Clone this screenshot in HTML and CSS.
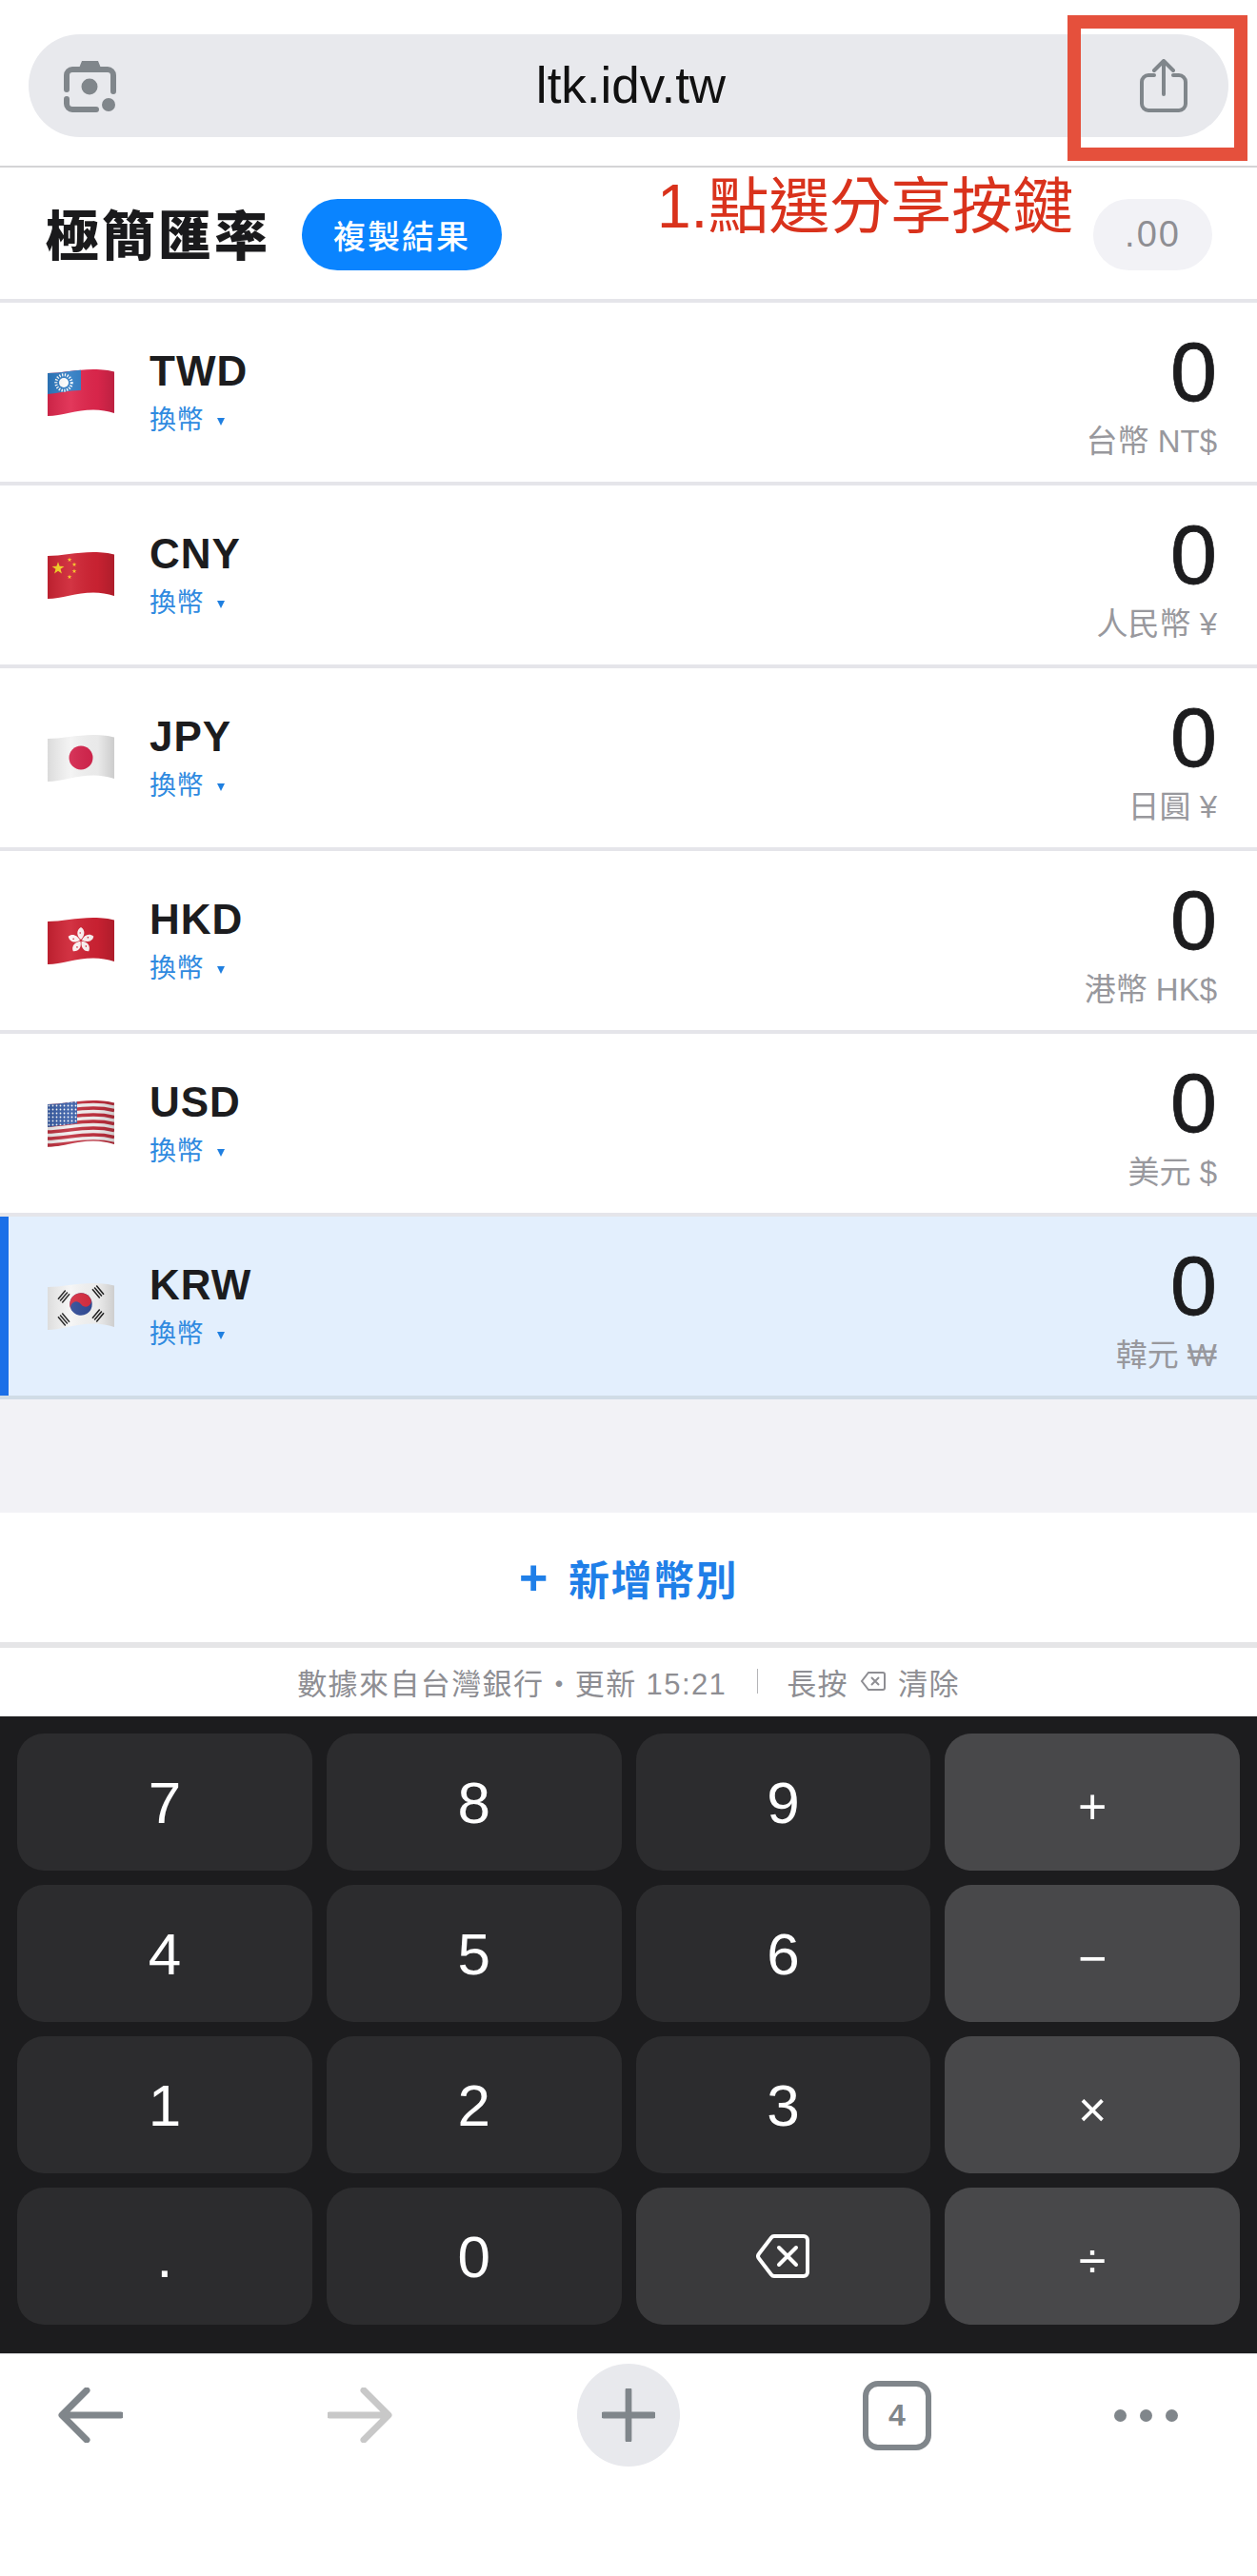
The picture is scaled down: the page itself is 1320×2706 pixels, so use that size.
FILE: index.html
```html
<!DOCTYPE html>
<html lang="zh-Hant">
<head>
    <meta charset="UTF-8">
    <meta name="viewport" content="width=device-width, initial-scale=1.0">
    <title>極簡匯率</title>
    <link rel="stylesheet" href="styles.css">
</head>
<body>
    <svg class="svg-defs" width="0" height="0" aria-hidden="true">
        <defs>
            <clipPath id="flag-clip">
                <path d="M0 4C14 4 30 0 48 0C58 0 64 1 70 2.500V46C63 44 56 42.500 48 42.500C30 42.500 14 49 0 49Z"/>
            </clipPath>
            <linearGradient id="flag-shade" x1="0" x2="1" y1="0" y2="0">
                <stop offset="0" stop-color="#000" stop-opacity=".1"/>
                <stop offset=".35" stop-color="#fff" stop-opacity=".08"/>
                <stop offset=".75" stop-color="#000" stop-opacity=".04"/>
                <stop offset="1" stop-color="#000" stop-opacity=".16"/>
            </linearGradient>
            <path id="flag-wave" d="M0 4C14 4 30 0 48 0C58 0 64 1 70 2.500"/>
            <polygon id="star" points="0,-5 1.200,-1.600 4.800,-1.500 1.900,.6 2.900,4 0,2 -2.900,4 -1.900,.6 -4.800,-1.500 -1.200,-1.600"/>
            <g id="petal">
                <path d="M0 -1C-5 -5 -5 -11 0 -14C5 -11 4 -5 0 -1Z" fill="#fdf3f3"/>
                <circle cx="-.8" cy="-8" r=".8" fill="#cf2233"/>
            </g>
            <path id="trigram" d="M-6 -2.800H6M-6 0H6M-6 2.800H6"/>
        </defs>
    </svg>

    <div class="top-bar">
        <div class="url-bar">
            <svg class="lens-icon" viewBox="0 0 55 55">
                <path class="icon-line" d="M3 31V16a6 6 0 0 1 6-6h37a6 6 0 0 1 6 6v17M3 41v5a6 6 0 0 0 6 6h25"/>
                <path class="icon-fill" d="M15 11l4-10h17l4 10z"/>
                <circle class="icon-fill" cx="27" cy="28" r="8.500"/>
                <circle class="icon-fill" cx="47" cy="47" r="7"/>
            </svg>
            <span class="url-text">ltk.idv.tw</span>
            <svg class="share-icon" viewBox="0 0 50 56">
                <path class="icon-line thin" d="M15 17H9a7 7 0 0 0-7 7v23a7 7 0 0 0 7 7h32a7 7 0 0 0 7-7V24a7 7 0 0 0-7-7h-6"/>
                <path class="icon-line thin" d="M25 37V3M15 12l10-10 10 10"/>
            </svg>
        </div>
    </div>

    <div class="header">
        <div class="title">極簡匯率</div>
        <button class="copy-btn">複製結果</button>
        <button class="decimals-btn">.00</button>
    </div>

    <div class="row">
        <svg class="flag" viewBox="0 0 70 49">
            <g clip-path="url(#flag-clip)">
                <rect width="70" height="49" fill="#e0274d"/>
                <path d="M0 0H35V22C22 22 12 25 0 26Z" fill="#2f7cc4"/>
                <circle cx="17" cy="14" r="8.200" fill="none" stroke="#fff" stroke-width="3" stroke-dasharray="1.300 1.500"/>
                <circle cx="17" cy="14" r="5" fill="#fff"/>
                <rect width="70" height="49" fill="url(#flag-shade)"/>
            </g>
        </svg>
        <div class="code-col">
            <div class="code">TWD</div>
            <div class="swap">換幣<span class="caret"></span></div>
        </div>
        <div class="value-col">
            <div class="value">0</div>
            <div class="unit">台幣 NT$</div>
        </div>
    </div>

    <div class="row">
        <svg class="flag" viewBox="0 0 70 49">
            <g clip-path="url(#flag-clip)">
                <rect width="70" height="49" fill="#cf2333"/>
                <use href="#star" transform="translate(11 17) scale(1.350)" fill="#f9d423"/>
                <use href="#star" transform="translate(23 8) scale(.5)" fill="#f9c423"/>
                <use href="#star" transform="translate(28 13) scale(.5)" fill="#f9c423"/>
                <use href="#star" transform="translate(28 20) scale(.5)" fill="#f9c423"/>
                <use href="#star" transform="translate(23 26) scale(.5)" fill="#f9c423"/>
                <rect width="70" height="49" fill="url(#flag-shade)"/>
            </g>
        </svg>
        <div class="code-col">
            <div class="code">CNY</div>
            <div class="swap">換幣<span class="caret"></span></div>
        </div>
        <div class="value-col">
            <div class="value">0</div>
            <div class="unit">人民幣 ¥</div>
        </div>
    </div>

    <div class="row">
        <svg class="flag" viewBox="0 0 70 49">
            <g clip-path="url(#flag-clip)">
                <rect width="70" height="49" fill="#f3f3f3"/>
                <circle cx="35" cy="24" r="12.500" fill="#d3234b"/>
                <rect width="70" height="49" fill="url(#flag-shade)"/>
            </g>
        </svg>
        <div class="code-col">
            <div class="code">JPY</div>
            <div class="swap">換幣<span class="caret"></span></div>
        </div>
        <div class="value-col">
            <div class="value">0</div>
            <div class="unit">日圓 ¥</div>
        </div>
    </div>

    <div class="row">
        <svg class="flag" viewBox="0 0 70 49">
            <g clip-path="url(#flag-clip)">
                <rect width="70" height="49" fill="#cf2233"/>
                <g transform="translate(35 24)">
                    <use href="#petal"/>
                    <use href="#petal" transform="rotate(72)"/>
                    <use href="#petal" transform="rotate(144)"/>
                    <use href="#petal" transform="rotate(216)"/>
                    <use href="#petal" transform="rotate(288)"/>
                </g>
                <rect width="70" height="49" fill="url(#flag-shade)"/>
            </g>
        </svg>
        <div class="code-col">
            <div class="code">HKD</div>
            <div class="swap">換幣<span class="caret"></span></div>
        </div>
        <div class="value-col">
            <div class="value">0</div>
            <div class="unit">港幣 HK$</div>
        </div>
    </div>

    <div class="row">
        <svg class="flag" viewBox="0 0 70 49">
            <defs>
                <pattern id="us-stars" width="4" height="4" patternUnits="userSpaceOnUse">
                    <circle cx="1.500" cy="1.500" r=".9" fill="#fff"/>
                </pattern>
            </defs>
            <g clip-path="url(#flag-clip)">
                <rect width="70" height="49" fill="#f4f0f0"/>
                <g class="us-stripes">
                    <use href="#flag-wave" y="1"/>
                    <use href="#flag-wave" y="8"/>
                    <use href="#flag-wave" y="15"/>
                    <use href="#flag-wave" y="22"/>
                    <use href="#flag-wave" y="29"/>
                    <use href="#flag-wave" y="36"/>
                    <use href="#flag-wave" y="43"/>
                </g>
                <path d="M0 0H31V24C20 25 10 27 0 28Z" fill="#3a5fa8"/>
                <path d="M0 0H31V24C20 25 10 27 0 28Z" fill="url(#us-stars)"/>
                <rect width="70" height="49" fill="url(#flag-shade)"/>
            </g>
        </svg>
        <div class="code-col">
            <div class="code">USD</div>
            <div class="swap">換幣<span class="caret"></span></div>
        </div>
        <div class="value-col">
            <div class="value">0</div>
            <div class="unit">美元 $</div>
        </div>
    </div>

    <div class="row row-active">
        <svg class="flag" viewBox="0 0 70 49">
            <g clip-path="url(#flag-clip)">
                <rect width="70" height="49" fill="#f5f5f5"/>
                <g transform="translate(35 22) rotate(-32)">
                    <circle r="11.700" fill="#2f4a96"/>
                    <path d="M-11.700 0A11.700 11.700 0 0 1 11.700 0A5.850 5.850 0 0 1 0 0A5.850 5.850 0 0 0 -11.700 0Z" fill="#d52b3f"/>
                </g>
                <g class="trigrams">
                    <use href="#trigram" transform="translate(17 14) rotate(-50)"/>
                    <use href="#trigram" transform="translate(53 9) rotate(50)"/>
                    <use href="#trigram" transform="translate(17 38) rotate(50)"/>
                    <use href="#trigram" transform="translate(53 34) rotate(-50)"/>
                </g>
                <rect width="70" height="49" fill="url(#flag-shade)"/>
            </g>
        </svg>
        <div class="code-col">
            <div class="code">KRW</div>
            <div class="swap">換幣<span class="caret"></span></div>
        </div>
        <div class="value-col">
            <div class="value">0</div>
            <div class="unit">韓元 ₩</div>
        </div>
    </div>

    <div class="spacer"></div>

    <div class="add-row"><span class="add-plus">+</span> 新增幣別</div>

    <div class="info-row">
        <span>數據來自台灣銀行・更新 15:21</span>
        <span class="info-sep"></span>
        <span>長按</span>
        <svg class="info-icon" viewBox="0 0 28 22">
            <path d="M9 2H24a2 2 0 0 1 2 2V18a2 2 0 0 1-2 2H9L2 11Z"/>
            <path d="M12 7l8 8M20 7l-8 8"/>
        </svg>
        <span>清除</span>
    </div>

    <div class="keypad">
        <button class="key">7</button>
        <button class="key">8</button>
        <button class="key">9</button>
        <button class="key key-op">+</button>
        <button class="key">4</button>
        <button class="key">5</button>
        <button class="key">6</button>
        <button class="key key-op">−</button>
        <button class="key">1</button>
        <button class="key">2</button>
        <button class="key">3</button>
        <button class="key key-op">×</button>
        <button class="key">.</button>
        <button class="key">0</button>
        <button class="key key-back">
            <svg class="back-icon" viewBox="0 0 56 46">
                <path d="M19 2H50a4 4 0 0 1 4 4V40a4 4 0 0 1-4 4H19a4 4 0 0 1-3-1.500L3 25.500a4 4 0 0 1 0-5L16 3.500A4 4 0 0 1 19 2Z"/>
                <path d="M24 14l18 18M42 14L24 32"/>
            </svg>
        </button>
        <button class="key key-op">÷</button>
    </div>

    <div class="bottom-bar">
        <svg class="nav-arrow" viewBox="0 0 68 58">
            <path d="M66 29H6M30 3L4 29l26 26"/>
        </svg>
        <svg class="nav-arrow nav-disabled" viewBox="0 0 68 58">
            <path d="M2 29H62M38 3l26 26-26 26"/>
        </svg>
        <div class="new-tab">
            <svg class="new-tab-icon" viewBox="0 0 58 58">
                <path d="M29 2V56M2 29H56"/>
            </svg>
        </div>
        <div class="tab-count">4</div>
        <div class="more-dots"><span></span><span></span><span></span></div>
    </div>

    <!-- annotation on top of the screenshot -->
    <div class="note-box"></div>
    <div class="note-text">1.點選分享按鍵</div>
</body>
</html>
```

FILE: styles.css
```css
* {
    box-sizing: border-box;
}
body {
    margin: 0;
    width: 1320px;
    height: 2706px;
    position: relative;
    background-color: white;
    font-family: "Liberation Sans", "Noto Sans CJK TC", sans-serif;
    color: #1c1c1e;
    overflow: hidden;
}
button {
    font-family: inherit;
    border: none;
    padding: 0;
}
.svg-defs {
    position: absolute;
}
.icon-line {
    fill: none;
    stroke: #80868b;
    stroke-width: 6;
    stroke-linecap: round;
    stroke-linejoin: round;
}
.icon-line.thin {
    stroke-width: 4;
}
.icon-fill {
    fill: #80868b;
}

/* browser address bar */
.top-bar {
    height: 176px;
    padding: 36px 30px 0;
    border-bottom: 2px solid #d4d4d6;
}
.url-bar {
    height: 108px;
    border-radius: 54px;
    background-color: #e8e9ed;
    display: flex;
    align-items: center;
    justify-content: space-between;
    padding: 0 43px 0 37px;
}
.lens-icon {
    width: 55px;
    height: 55px;
}
.url-text {
    font-size: 53px;
    color: #111;
    margin: 0 0 2px 6px;
}
.share-icon {
    width: 50px;
    height: 56px;
}

/* app header */
.header {
    height: 142px;
    display: flex;
    align-items: center;
    padding: 2px 47px 0 48px;
    border-bottom: 4px solid #e5e5ea;
}
.title {
    font-size: 56px;
    font-weight: 900;
    letter-spacing: 3px;
    line-height: 1;
    margin: 6px 33px 0 0;
    color: #1a1a1c;
}
.copy-btn {
    width: 210px;
    height: 75px;
    border-radius: 38px;
    background-color: #0a84ff;
    color: white;
    font-size: 34px;
    font-weight: 500;
    letter-spacing: 2px;
}
.decimals-btn {
    width: 125px;
    height: 75px;
    border-radius: 38px;
    background-color: #f2f2f6;
    color: #8e8e93;
    font-size: 38px;
    letter-spacing: 2px;
    margin-left: auto;
}

/* currency rows */
.row {
    height: 192px;
    display: flex;
    align-items: center;
    padding: 0 42px 0 50px;
    border-bottom: 4px solid #e5e5ea;
}
.row-active {
    background-color: #e3effd;
    border-bottom-color: #d0dce6;
    box-shadow: inset 9px 0 0 #1a6fe8;
}
.flag {
    width: 70px;
    height: 49px;
    margin-right: 37px;
    flex-shrink: 0;
}
.us-stripes use {
    fill: none;
    stroke: #c0313f;
    stroke-width: 3.500;
}
.trigrams use {
    fill: none;
    stroke: #222;
    stroke-width: 1.500;
}
.code-col {
    margin-top: 1px;
}
.code {
    font-size: 44px;
    font-weight: 700;
    letter-spacing: 1px;
    line-height: 50px;
    margin-bottom: 8px;
}
.swap {
    font-size: 28px;
    line-height: 38px;
    letter-spacing: .5px;
    color: #2f8ae0;
    display: flex;
    align-items: center;
}
.caret {
    width: 0;
    height: 0;
    margin-left: 14px;
    margin-top: 2px;
    border-left: 4px solid transparent;
    border-right: 4px solid transparent;
    border-top: 8px solid #1f7fe0;
}
.value-col {
    margin-left: auto;
    text-align: right;
    padding-top: 8px;
}
.value {
    font-size: 88px;
    line-height: 86px;
    -webkit-text-stroke: .8px #1c1c1e;
}
.unit {
    font-size: 33px;
    line-height: 40px;
    color: #98989d;
    margin-top: 10px;
}

.spacer {
    height: 119px;
    background-color: #f2f2f6;
}
.add-row {
    height: 142px;
    display: flex;
    align-items: center;
    justify-content: center;
    gap: 20px;
    font-size: 43px;
    font-weight: 700;
    letter-spacing: 1.500px;
    color: #1f7fe8;
    border-bottom: 6px solid #e5e5e7;
}
.add-plus {
    font-size: 52px;
    line-height: 1;
    font-weight: 700;
}
.info-row {
    height: 72px;
    display: flex;
    align-items: center;
    justify-content: center;
    font-size: 31px;
    letter-spacing: 1.400px;
    color: #8e8e93;
    gap: 12px;
    padding-bottom: 2px;
}
.info-sep {
    width: 1px;
    height: 26px;
    background-color: #b5b5b8;
    margin: 0 18px 0 20px;
}
.info-icon {
    width: 28px;
    height: 24px;
    fill: none;
    stroke: #8e8e93;
    stroke-width: 2;
}

/* keypad */
.keypad {
    height: 669px;
    background-color: #1c1c1e;
    padding: 18px;
    display: grid;
    grid-template-columns: repeat(4, 1fr);
    grid-auto-rows: 144px;
    gap: 15px;
}
.key {
    border-radius: 28px;
    background-color: #2c2c2e;
    color: white;
    font-size: 62px;
    display: flex;
    align-items: center;
    justify-content: center;
}
.key-op {
    background-color: #48484a;
    font-size: 52px;
    padding-top: 10px;
}
.key-back {
    background-color: #3a3a3c;
}
.back-icon {
    width: 56px;
    height: 46px;
    fill: none;
    stroke: white;
    stroke-width: 4;
    stroke-linecap: round;
    stroke-linejoin: round;
}

/* browser bottom bar */
.bottom-bar {
    height: 234px;
    border-top: 1px solid #d4d4d6;
    display: grid;
    grid-template-columns: 190px 376px 188px 376px 146px;
    justify-items: center;
    align-items: start;
    padding-top: 10px;
}
.nav-arrow {
    width: 68px;
    height: 58px;
    margin-top: 25px;
    fill: none;
    stroke: #80868b;
    stroke-width: 7;
    stroke-linecap: round;
    stroke-linejoin: round;
}
.nav-disabled {
    stroke: #c8c8c8;
}
.new-tab {
    width: 108px;
    height: 108px;
    border-radius: 50%;
    background-color: #e8e9ed;
    display: flex;
    align-items: center;
    justify-content: center;
}
.new-tab-icon {
    width: 56px;
    height: 56px;
    fill: none;
    stroke: #80868b;
    stroke-width: 7;
    stroke-linecap: round;
}
.tab-count {
    width: 72px;
    height: 73px;
    margin-top: 18px;
    border: 6px solid #80868b;
    border-radius: 16px;
    display: flex;
    align-items: center;
    justify-content: center;
    font-size: 32px;
    font-weight: 700;
    color: #80868b;
}
.more-dots {
    display: flex;
    gap: 14px;
    margin-top: 48px;
}
.more-dots span {
    width: 13px;
    height: 13px;
    border-radius: 50%;
    background-color: #80868b;
}

/* red annotation */
.note-box {
    position: absolute;
    left: 1121px;
    top: 16px;
    width: 189px;
    height: 153px;
    border: 14px solid #e5503c;
}
.note-text {
    position: absolute;
    left: 690px;
    top: 173px;
    font-size: 64px;
    line-height: 88px;
    color: #d9321c;
    white-space: nowrap;
}
```
